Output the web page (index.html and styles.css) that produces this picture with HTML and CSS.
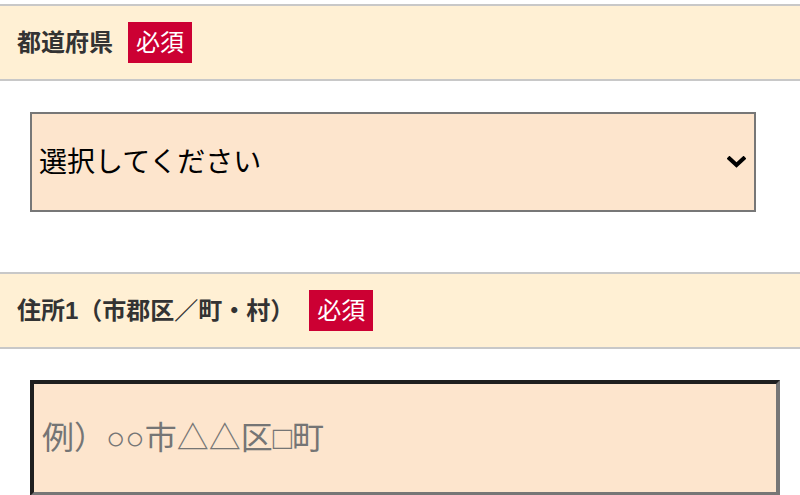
FILE: index.html
```html
<!DOCTYPE html>
<html lang="ja">
<head>
<meta charset="utf-8">
<title>住所入力</title>
<link rel="stylesheet" href="styles.css">
</head>
<body>
<div class="form">
  <div class="field-head">
    <span class="field-label">都道府県</span>
    <span class="badge">必須</span>
  </div>
  <div class="field-body field-body--select">
    <div class="select-box">
      <select class="select">
        <option>選択してください</option>
      </select>
      <svg class="chevron" width="19" height="12" viewBox="0 0 19 12" aria-hidden="true">
        <path d="M2.5 2.5 L9.5 9 L16.5 2.5" fill="none" stroke="#000" stroke-width="4" stroke-linecap="square"/>
      </svg>
    </div>
  </div>
  <div class="field-head">
    <span class="field-label">住所1（市郡区／町・村）</span>
    <span class="badge">必須</span>
  </div>
  <div class="field-body field-body--input">
    <input class="text-input" type="text" placeholder="例）○○市△△区□町">
  </div>
</div>
</body>
</html>
```
FILE: styles.css
```css
* {
  box-sizing: border-box;
}

html, body {
  margin: 0;
  padding: 0;
  background: #ffffff;
  overflow: hidden;
}

body {
  font-family: "Liberation Sans", "Noto Sans CJK JP", sans-serif;
  color: #333333;
}

.form {
  padding-top: 4px;
  width: 800px;
}

.field-head {
  display: flex;
  align-items: center;
  gap: 15px;
  height: 77px;
  padding-left: 17px;
  background: #fff0d4;
  border-top: 2px solid #c8c8c8;
  border-bottom: 2px solid #c8c8c8;
}

.field-label {
  font-size: 24px;
  font-weight: bold;
  color: #333333;
  line-height: 1;
}

.badge {
  display: flex;
  align-items: center;
  justify-content: center;
  height: 41px;
  padding: 0 8px;
  background: #cc0033;
  color: #ffffff;
  font-size: 24px;
  line-height: 1;
}

.field-body--select {
  padding: 31px 0 60px 30px;
}

.field-body--input {
  padding: 31px 0 0 30px;
}

.select-box {
  display: flex;
  align-items: center;
  width: 726px;
  height: 100px;
  background: #fde5cd;
  border: 2px solid #777777;
  padding-right: 8px;
}

.select {
  flex: 1;
  height: 100%;
  appearance: none;
  -webkit-appearance: none;
  border: none;
  outline: none;
  background: transparent;
  font-family: "Liberation Sans", "Noto Sans CJK JP", sans-serif;
  font-size: 28px;
  color: #000000;
  padding: 0 0 0 7px;
  margin: 0;
}

.chevron {
  display: block;
  flex: none;
}

.text-input {
  display: block;
  width: 750px;
  height: 116px;
  margin: 0;
  background: #fde5cd;
  border-style: solid;
  border-width: 4px;
  border-color: #1f1f1f #767676 #767676 #1f1f1f;
  font-family: "Liberation Sans", "Noto Sans CJK JP", sans-serif;
  font-size: 32px;
  color: #000000;
  padding: 0 0 0 8px;
  outline: none;
}

.text-input::placeholder {
  color: #757575;
  opacity: 1;
}
```
